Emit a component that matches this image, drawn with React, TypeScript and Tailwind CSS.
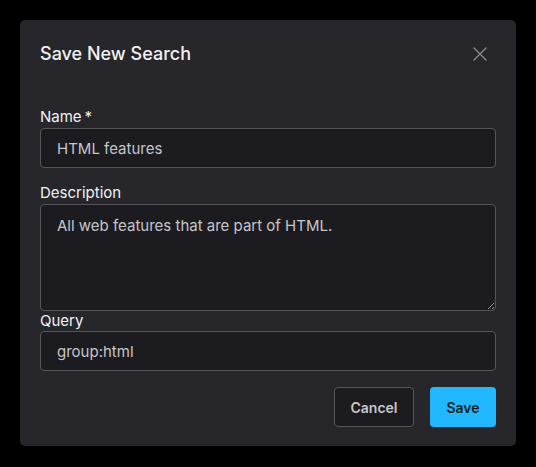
import { X } from "lucide-react";

const inputClass =
  "block w-full rounded-[4px] border border-[#55555b] bg-[#1c1c20] px-4 text-[15px] text-[#c6c6ca] outline-none";

const labelClass = "text-[15px] font-normal leading-5 text-[#f2f2f4]";

export default function App() {
  return (
    <div
      className="min-h-[467px] bg-black p-5"
      style={{ fontFamily: "Inter, 'Noto Sans', sans-serif" }}
    >
      <div className="flex flex-col rounded-[5px] bg-[#26262b] px-5 pt-5 pb-[19px]">
        <div className="flex h-7 items-center justify-between">
          <h2 className="text-[18px] font-medium leading-7 text-[#f2f2f4]">
            Save New Search
          </h2>
          <button className="mr-[2px] flex h-7 w-7 items-center justify-center text-[#8d8d93]">
            <X size={24} strokeWidth={1.2} />
          </button>
        </div>

        <label className={`${labelClass} mt-[39px]`}>
          Name<span className="ml-[3px]">*</span>
        </label>
        <input
          className={`${inputClass} mt-px h-[40px]`}
          defaultValue="HTML features"
          readOnly
        />

        <label className={`${labelClass} mt-[15px]`}>Description</label>
        <textarea
          className={`${inputClass} mt-px h-[107px] resize-y py-[11px] leading-5 [color-scheme:dark]`}
          defaultValue="All web features that are part of HTML."
          readOnly
        />

        <label className={labelClass}>Query</label>
        <input
          className={`${inputClass} h-[40px]`}
          defaultValue="group:html"
          readOnly
        />

        <div className="mt-4 flex justify-end gap-4">
          <button className="h-10 w-20 rounded-[4px] border border-[#55555b] bg-[#1c1c20] text-[14px] font-semibold text-[#c6c6ca]">
            Cancel
          </button>
          <button className="h-10 w-[66px] rounded-[4px] bg-[#22b8ff] text-[14px] font-semibold text-[#1c1c20]">
            Save
          </button>
        </div>
      </div>
    </div>
  );
}
